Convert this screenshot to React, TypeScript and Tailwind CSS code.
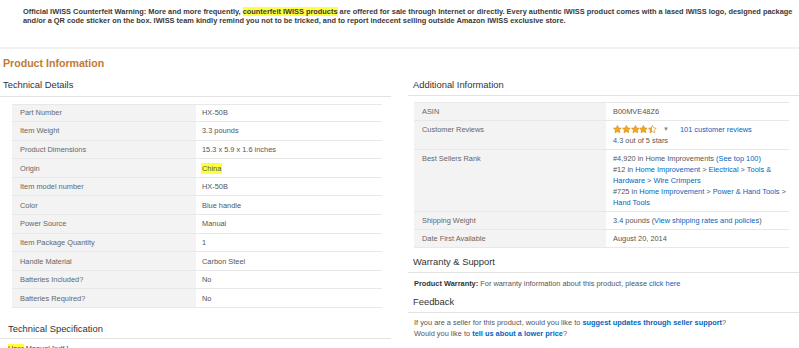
import React from 'react';

const techDetails: [string, React.ReactNode][] = [
  ['Part Number', 'HX-50B'],
  ['Item Weight', '3.3 pounds'],
  ['Product Dimensions', '15.3 x 5.9 x 1.6 inches'],
  ['Origin', <span className="bg-[#ffff3b] px-[1px] -mx-[1px]">China</span>],
  ['Item model number', 'HX-50B'],
  ['Color', 'Blue handle'],
  ['Power Source', 'Manual'],
  ['Item Package Quantity', '1'],
  ['Handle Material', 'Carbon Steel'],
  ['Batteries Included?', 'No'],
  ['Batteries Required?', 'No'],
];

const Link: React.FC<{ children: React.ReactNode; bold?: boolean }> = ({ children, bold }) => (
  <span className={bold ? 'text-[#0066c0] font-bold' : 'text-[#0066c0]'}>{children}</span>
);

const Star: React.FC<{ fill: number; id: string }> = ({ fill, id }) => (
  <svg width="8.8" height="8.4" viewBox="0 0 20 19" className="block">
    <defs>
      <linearGradient id={id} x1="0" x2="1" y1="0" y2="0">
        <stop offset={fill} stopColor="#f4a71b" />
        <stop offset={fill} stopColor="#ffffff" />
      </linearGradient>
    </defs>
    <path
      d="M10 1l2.7 5.6 6.1.8-4.5 4.2 1.1 6.1L10 14.8l-5.4 2.9 1.1-6.1L1.2 7.4l6.1-.8z"
      fill={`url(#${id})`}
      stroke="#d08a14"
      strokeWidth="1.4"
      strokeLinejoin="round"
    />
  </svg>
);

const Heading: React.FC<{ children: React.ReactNode; className?: string }> = ({ children, className }) => (
  <div className={`h-[14px] leading-[14px] text-[9.4px] text-[#333] ${className ?? ''}`}>{children}</div>
);

const Divider: React.FC<{ className?: string }> = ({ className }) => (
  <div className={`h-px bg-[#e3e3e3] ${className ?? ''}`} />
);

const App: React.FC = () => {
  return (
    <div className="w-[799px] h-[348px] overflow-hidden bg-white font-['Liberation_Sans',Arial,sans-serif] text-[#333]">
      {/* Counterfeit warning */}
      <div className="h-[47px] pl-[23px] pr-[6px] pt-[8px] text-[7.4px] leading-[8.5px] font-bold text-[#3a3a3a]">
        Official IWISS Counterfeit Warning: More and more frequently,{' '}
        <span className="bg-[#ffff3b]">counterfeit IWISS products</span> are offered for sale through Internet or
        directly. Every authentic IWISS product comes with a lased IWISS logo, designed package and/or a QR code
        sticker on the box. IWISS team kindly remind you not to be tricked, and to report indecent selling outside
        Amazon IWISS exclusive store.
      </div>
      <div className="h-[1.5px] bg-[#f1f1f1]" />

      <h2 className="mt-[7px] pl-[3px] h-[14px] leading-[14px] text-[10.6px] font-bold text-[#c17a33]">
        Product Information
      </h2>

      <div className="flex">
        {/* Left column */}
        <div className="w-[391px] shrink-0">
          <Heading className="mt-[8px] pl-[3px]">Technical Details</Heading>
          <Divider className="mt-[4px]" />
          <div className="mt-[7px] ml-[12px] mr-[9px] text-[7.4px] leading-[11px]">
            {techDetails.map(([label, value], idx) => (
              <div key={idx} className="flex h-[18.6px] border-b border-[#e8e8e8] first:border-t">
                <div className="w-[184px] shrink-0 bg-[#f3f3f3] pl-[8px] flex items-center text-[#666]">{label}</div>
                <div className="flex-1 pl-[6px] flex items-center text-[#555]">{value}</div>
              </div>
            ))}
          </div>
          <Heading className="mt-[14px] pl-[8px]">Technical Specification</Heading>
          <Divider className="mt-[2px]" />
          <div className="mt-[4px] pl-[8px] text-[7.4px] leading-[11px] text-[#444]">
            <span className="bg-[#ffff3b]">User</span> Manual <Link>[pdf ]</Link>
          </div>
        </div>

        {/* Right column */}
        <div className="ml-[17px] flex-1">
          <Heading className="mt-[8px] pl-[5px]">Additional Information</Heading>
          <Divider className="mt-[3px]" />
          <div className="mt-[6px] ml-[6px] mr-[10px] text-[7.4px] leading-[11px]">
            <div className="flex border-y border-[#e8e8e8]">
              <div className="w-[192px] shrink-0 bg-[#f3f3f3] pl-[8px] py-[3px] text-[#666]">ASIN</div>
              <div className="flex-1 pl-[7px] py-[3px] text-[#555]">B00MVE48Z6</div>
            </div>
            <div className="flex border-b border-[#e8e8e8]">
              <div className="w-[192px] shrink-0 bg-[#f3f3f3] pl-[8px] py-[3px] text-[#666]">Customer Reviews</div>
              <div className="flex-1 pl-[7px] py-[3px] text-[#555]">
                <div className="flex items-center h-[11px]">
                  <div className="flex">
                    <Star fill={1} id="s1" />
                    <Star fill={1} id="s2" />
                    <Star fill={1} id="s3" />
                    <Star fill={1} id="s4" />
                    <Star fill={0.45} id="s5" />
                  </div>
                  <span className="ml-[6px] text-[6px] text-[#888]">▼</span>
                  <span className="ml-[11px]">
                    <Link>101 customer reviews</Link>
                  </span>
                </div>
                <div>4.3 out of 5 stars</div>
              </div>
            </div>
            <div className="flex border-b border-[#e8e8e8]">
              <div className="w-[192px] shrink-0 bg-[#f3f3f3] pl-[8px] py-[3px] text-[#666]">Best Sellers Rank</div>
              <div className="flex-1 pl-[7px] pr-[2px] py-[3px] text-[#555]">
                <div>
                  #4,920 in Home Improvements <Link>(See top 100)</Link>
                </div>
                <div>
                  #12 in <Link>Home Improvement</Link> &gt; <Link>Electrical</Link> &gt;{' '}
                  <Link>Tools &amp; Hardware</Link> &gt; <Link>Wire Crimpers</Link>
                </div>
                <div>
                  #725 in <Link>Home Improvement</Link> &gt; <Link>Power &amp; Hand Tools</Link> &gt;{' '}
                  <Link>Hand Tools</Link>
                </div>
              </div>
            </div>
            <div className="flex border-b border-[#e8e8e8]">
              <div className="w-[192px] shrink-0 bg-[#f3f3f3] pl-[8px] py-[3px] text-[#666]">Shipping Weight</div>
              <div className="flex-1 pl-[7px] py-[3px] text-[#555]">
                3.4 pounds (<Link>View shipping rates and policies</Link>)
              </div>
            </div>
            <div className="flex border-b border-[#e8e8e8]">
              <div className="w-[192px] shrink-0 bg-[#f3f3f3] pl-[8px] py-[3px] text-[#666]">Date First Available</div>
              <div className="flex-1 pl-[7px] py-[3px] text-[#555]">August 20, 2014</div>
            </div>
          </div>

          <Heading className="mt-[7px] pl-[5px]">Warranty &amp; Support</Heading>
          <Divider className="mt-[3px]" />
          <div className="mt-[5px] pl-[6px] text-[7.4px] leading-[11px] text-[#555]">
            <span className="font-bold text-[#333]">Product Warranty:</span> For warranty information about this
            product, please <Link>click here</Link>
          </div>
          <Heading className="mt-[6px] pl-[5px]">Feedback</Heading>
          <Divider className="mt-[3px]" />
          <div className="mt-[4px] pl-[6px] text-[7.4px] leading-[11px] text-[#555]">
            <div>
              If you are a seller for this product, would you like to{' '}
              <Link bold>suggest updates through seller support</Link>?
            </div>
            <div>
              Would you like to <Link bold>tell us about a lower price</Link>?
            </div>
          </div>
        </div>
      </div>
    </div>
  );
};

export default App;
